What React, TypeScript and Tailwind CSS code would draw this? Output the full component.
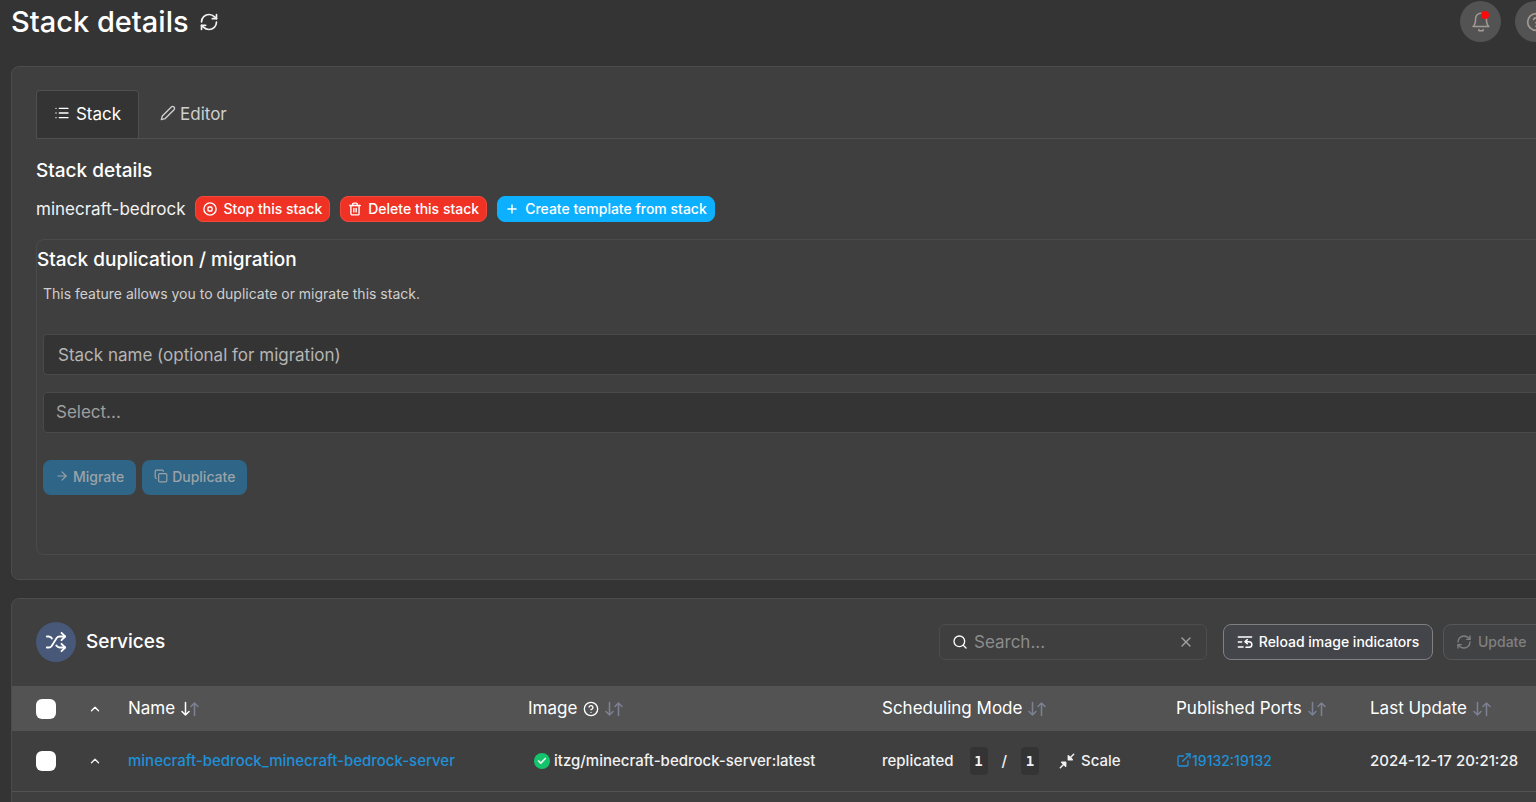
import type { ReactNode } from "react";
import {
  ArrowRight,
  Check,
  ChevronUp,
  CircleQuestionMark,
  Copy,
  ExternalLink,
  List,
  Plus,
  RefreshCw,
  Search,
  Shuffle,
  Trash2,
  X,
} from "lucide-react";
import clsx from "clsx";

type IconProps = { className?: string };

function BellIcon({ className }: IconProps) {
  return (
    <svg viewBox="0 0 24 24" fill="none" stroke="currentColor" strokeWidth="1.8" strokeLinecap="round" strokeLinejoin="round" className={className}>
      <path d="M18.500 8A6.500 6.500 0 0 0 5.500 8c0 7-3 9.500-3 9.500h19s-3-2.500-3-9.500" />
      <path d="M9.500 21v1.500h5V21" />
    </svg>
  );
}

function PencilIcon({ className }: IconProps) {
  return (
    <svg viewBox="0 0 24 24" fill="none" stroke="currentColor" strokeWidth="2" strokeLinecap="round" strokeLinejoin="round" className={className}>
      <path d="M17 3a2.828 2.828 0 1 1 4 4L7.5 20.5 2 22l1.5-5.5L17 3z" />
    </svg>
  );
}

function StopIcon({ className }: IconProps) {
  return (
    <svg viewBox="0 0 24 24" fill="none" stroke="currentColor" strokeWidth="2.4" className={className}>
      <circle cx="12" cy="12" r="10.5" />
      <rect x="8.5" y="8.5" width="7" height="7" rx="2" />
    </svg>
  );
}

function ReloadListIcon({ className }: IconProps) {
  return (
    <svg viewBox="0 0 24 24" fill="none" stroke="currentColor" strokeWidth="2.2" strokeLinecap="round" strokeLinejoin="round" className={className}>
      <path d="M2 4.500h20" />
      <path d="M2 12h5" />
      <path d="M2 19.500h7" />
      <path d="M13 11.500h5a4.200 4.200 0 0 1 0 8.500h-4.500" />
      <path d="M15.500 8.500l-3.500 3 3.500 3" />
    </svg>
  );
}

function ScaleIcon({ className }: IconProps) {
  return (
    <svg viewBox="0 0 24 24" fill="none" stroke="currentColor" strokeWidth="2.2" strokeLinecap="round" strokeLinejoin="round" className={className}>
      <path d="M22 2l-7 7M2 22l7-7" />
      <path d="M14 4v6h6zM10 20v-6H4z" fill="currentColor" />
    </svg>
  );
}

// down arrow lights up when the column is sorted
function SortArrows({ active }: { active?: boolean }) {
  return (
    <svg viewBox="0 0 18 16" fill="none" strokeWidth="1.5" strokeLinecap="round" strokeLinejoin="round" className="h-4 w-[18px]">
      <path d="M4.500 1.500v12.500M1 10.500l3.500 3.500 3.500-3.500" className={active ? "stroke-white" : "stroke-[#7c8293]"} />
      <path d="M13.500 14.500V2M10 5.500l3.500-3.500 3.500 3.500" className="stroke-[#7c8293]" />
    </svg>
  );
}

function HeaderCell({ label, help, active }: { label: string; help?: boolean; active?: boolean }) {
  return (
    <th scope="col" className="p-0 text-left font-normal">
      <button className="flex items-center gap-1.5">
        {label}
        {help && <CircleQuestionMark className="size-4" />}
        <SortArrows active={active} />
      </button>
    </th>
  );
}

function Pill({ tone, children }: { tone: "danger" | "primary"; children: ReactNode }) {
  return (
    <button
      className={clsx(
        "flex h-[26px] items-center gap-1.5 rounded-lg border px-[7px] text-sm font-medium text-white",
        tone === "danger" ? "border-[#f04a3e] bg-[#f03225]" : "border-[#0db0ff] bg-[#0db0ff]",
      )}
    >
      {children}
    </button>
  );
}

function StackPanel() {
  return (
    <section className="rounded-lg border border-[#4c4c4c] bg-[#3f3f3f] px-6 pt-[23px] pb-6">
      <div className="-mr-6 flex border-b border-[#4f4f4f] text-[17px]">
        <button className="flex h-12 w-[103px] items-center justify-center gap-1.5 rounded-t border border-b-0 border-[#4f4f4f] bg-[#343434] text-white">
          <List className="mb-1 size-4" />
          Stack
        </button>
        <button className="flex h-12 items-center gap-1 border-t border-transparent px-[21px] text-[#cfcfcf]">
          <PencilIcon className="mb-1 size-4" />
          Editor
        </button>
      </div>

      <h2 className="mt-5 text-[19px] leading-6 font-medium text-white">Stack details</h2>
      <div className="mt-[13px] flex items-center gap-2.5">
        <span className="text-[17px] leading-6">minecraft-bedrock</span>
        <Pill tone="danger">
          <StopIcon className="size-3.5" />
          Stop this stack
        </Pill>
        <Pill tone="danger">
          <Trash2 className="size-3.5" strokeWidth={2.4} />
          Delete this stack
        </Pill>
        <Pill tone="primary">
          <Plus className="size-3.5" strokeWidth={2.4} />
          Create template from stack
        </Pill>
      </div>

      <div className="mt-[17px] h-[316px] rounded-lg border border-[#4b4b4b]">
        <h2 className="mt-2 text-[19px] leading-6 font-medium text-white">Stack duplication / migration</h2>
        <form className="pl-1.5">
          <p className="mt-3 text-sm leading-5 text-[#cfcfcf]">This feature allows you to duplicate or migrate this stack.</p>
          <input
            aria-label="Stack name"
            placeholder="Stack name (optional for migration)"
            className="mt-[30px] block h-[41px] w-full rounded border border-[#4a4a4a] bg-[#343434] px-3.5 text-[17px] placeholder:text-[#b5b5b5]"
          />
          <select
            aria-label="Environment"
            className="mt-[17px] block h-[41px] w-full appearance-none rounded border border-[#4a4a4a] bg-[#343434] px-3 text-[17px] text-[#9f9f9f]"
          >
            <option>Select...</option>
          </select>
          <div className="mt-[27px] flex gap-1.5 text-sm font-medium text-[#9ba3a8]">
            <button type="button" disabled className="flex h-[35px] items-center gap-1 rounded-lg bg-[#2f6586] px-3 pb-0.5">
              <ArrowRight className="mb-0.5 size-3.5" />
              Migrate
            </button>
            <button type="button" disabled className="flex h-[35px] items-center gap-1 rounded-lg bg-[#2f6586] px-3 pb-0.5">
              <Copy className="mb-0.5 size-3.5" />
              Duplicate
            </button>
          </div>
        </form>
      </div>
    </section>
  );
}

function ServicesPanel() {
  return (
    <section className="mt-[18px] rounded-lg border border-[#4c4c4c] bg-[#3f3f3f] pb-6">
      <div className="flex h-[87px] items-center pb-0.5 pl-6">
        <span className="flex size-10 items-center justify-center rounded-full bg-[#475878] text-white">
          <Shuffle className="size-[22px]" />
        </span>
        <h2 className="ml-2.5 flex-1 text-[19px] leading-6 font-medium text-white">Services</h2>

        <div className="flex h-9 w-[268px] items-center gap-1.5 rounded-md border border-[#4d4d4d] px-3">
          <Search className="size-4 text-white" />
          <input
            aria-label="Search services"
            placeholder="Search..."
            className="min-w-0 flex-1 bg-transparent text-[17px] leading-6 placeholder:text-[#8c8c8c]"
          />
          <button aria-label="Clear search" className="text-[#a0a0a0]">
            <X className="size-4" />
          </button>
        </div>
        <button className="ml-4 flex h-9 w-[210px] items-center justify-center gap-1.5 rounded-lg border border-[#808080] bg-[#43454a] text-sm font-medium text-white">
          <ReloadListIcon className="size-4" />
          Reload image indicators
        </button>
        <button
          disabled
          className="ml-2.5 flex h-9 w-[140px] items-center gap-1.5 rounded-lg border border-[#575757] bg-[#414244] px-3 text-sm font-medium text-[#808080]"
        >
          <RefreshCw className="size-4" />
          Update
        </button>
      </div>

      <table className="w-full table-fixed border-collapse">
        <colgroup>
          <col className="w-[76px]" />
          <col className="w-10" />
          <col className="w-[400px]" />
          <col className="w-[354px]" />
          <col className="w-[294px]" />
          <col className="w-[194px]" />
          <col />
        </colgroup>
        <thead>
          <tr className="h-[45px] bg-[#535353] text-[17px] text-white">
            <th className="p-0 pl-6">
              <input type="checkbox" aria-label="Select all services" className="block size-5 appearance-none rounded-md bg-white" />
            </th>
            <th className="p-0">
              <button aria-label="Expand all" className="block">
                <ChevronUp className="size-3.5" strokeWidth={2.4} />
              </button>
            </th>
            <HeaderCell label="Name" active />
            <HeaderCell label="Image" help />
            <HeaderCell label="Scheduling Mode" />
            <HeaderCell label="Published Ports" />
            <HeaderCell label="Last Update" />
          </tr>
        </thead>
        <tbody>
          <tr className="h-[60px] border-b border-[#535353] text-[15px] font-medium text-[#f2f2f2]">
            <td className="p-0 pl-6">
              <input type="checkbox" aria-label="Select service" className="block size-5 appearance-none rounded-md bg-white" />
            </td>
            <td className="p-0">
              <button aria-label="Expand service" className="block">
                <ChevronUp className="size-3.5" strokeWidth={2.4} />
              </button>
            </td>
            <td className="p-0">
              <a href="#service" className="text-[#2090d8]">minecraft-bedrock_minecraft-bedrock-server</a>
            </td>
            <td className="p-0">
              <div className="flex items-center gap-1 pl-1.5">
                <span className="flex size-4 items-center justify-center rounded-full bg-[#13c46c]">
                  <Check className="size-2.5" strokeWidth={4} />
                </span>
                itzg/minecraft-bedrock-server:latest
              </div>
            </td>
            <td className="p-0">
              <div className="flex items-center">
                replicated
                <code className="ml-4 w-[18px] rounded bg-[#343434] py-1 text-center font-['DejaVu_Sans_Mono',monospace] text-sm font-bold">1</code>
                <span className="mx-3.5">/</span>
                <code className="w-[18px] rounded bg-[#343434] py-1 text-center font-['DejaVu_Sans_Mono',monospace] text-sm font-bold">1</code>
                <a href="#scale" className="ml-5 flex items-center gap-1.5">
                  <ScaleIcon className="size-4" />
                  Scale
                </a>
              </div>
            </td>
            <td className="p-0">
              <a href="#port" className="flex items-center text-sm text-[#2090d8]">
                <ExternalLink className="mb-0.5 size-4" />
                19132:19132
              </a>
            </td>
            <td className="p-0">2024-12-17 20:21:28</td>
          </tr>
        </tbody>
      </table>
    </section>
  );
}

export default function App() {
  return (
    <div className="h-screen overflow-hidden bg-[#343434] font-['Inter',sans-serif] text-base text-[#f2f2f2]">
      {/* content is wider than the window and runs off to the right */}
      <div className="-mr-12 pl-[11px]">
        <header className="flex h-[66px] items-start justify-between">
          <div className="flex h-11 items-center gap-2.5">
            <h1 className="text-[29px] font-medium text-white">Stack details</h1>
            <button aria-label="Refresh">
              <RefreshCw className="size-5" />
            </button>
          </div>
          <div className="mr-7 flex gap-3.5 pt-px text-[#a39a94]">
            <button aria-label="Notifications" className="relative flex size-[41px] items-center justify-center rounded-full bg-[#535353]">
              <BellIcon className="size-5" />
              <span className="absolute top-2.5 right-3 size-2 rounded-full bg-[#ff0a0a]" />
            </button>
            <button aria-label="Help" className="flex size-[41px] items-center justify-center rounded-full bg-[#535353]">
              <CircleQuestionMark className="size-5" />
            </button>
          </div>
        </header>
        <StackPanel />
        <ServicesPanel />
      </div>
    </div>
  );
}
